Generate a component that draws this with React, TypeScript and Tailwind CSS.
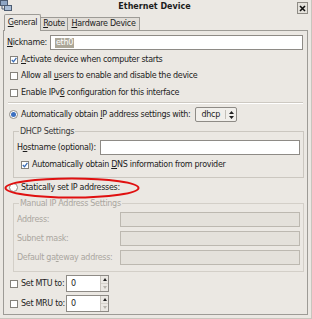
import React from 'react';

const Check: React.FC<{ checked?: boolean }> = ({ checked }) => (
  <span className="w-[8px] h-[8px] border border-[#85827c] bg-white flex items-center justify-center shrink-0">
    {checked && (
      <svg width="6" height="6" viewBox="0 0 6 6">
        <path d="M0.8 3 L2.5 4.8 L5.4 0.8" fill="none" stroke="#3a6cb4" strokeWidth="1.3" />
      </svg>
    )}
  </span>
);

const Radio: React.FC<{ checked?: boolean }> = ({ checked }) => (
  <span className="w-[9px] h-[9px] rounded-full border border-[#8e8b85] bg-white flex items-center justify-center shrink-0">
    {checked && <span className="w-[5px] h-[5px] rounded-full bg-[#3b6fc0]" />}
  </span>
);

const Spin: React.FC<{ value: string }> = ({ value }) => (
  <div className="w-[43px] h-[17px] flex border border-[#8e8b86] bg-white shrink-0">
    <span className="flex-1 pl-[4px] flex items-center">{value}</span>
    <span className="w-[8px] flex flex-col border-l border-[#c8c4bd] bg-[#ebe8e3]">
      <span className="flex-1 flex items-center justify-center">
        <svg width="4" height="3" viewBox="0 0 4 3"><path d="M0 3 L2 0 L4 3 Z" fill="#222" /></svg>
      </span>
      <span className="flex-1 flex items-center justify-center border-t border-[#d6d2cb]">
        <svg width="4" height="3" viewBox="0 0 4 3"><path d="M0 0 L2 3 L4 0 Z" fill="#b7b3ac" /></svg>
      </span>
    </span>
  </div>
);

const App: React.FC = () => {
  return (
    <div className="w-[312px] h-[319px] bg-[#ebe8e3] font-['DejaVu_Sans',sans-serif] text-[8px] leading-[10px] tracking-[-0.3px] whitespace-nowrap text-[#1c1c1c] flex flex-col border-r border-b border-[#c9c5be] overflow-hidden">
      {/* title bar */}
      <div className="h-[14px] grid grid-cols-[12px_1fr_14px] shrink-0">
        <svg width="12" height="12" viewBox="0 0 12 12">
          <rect x="0.5" y="0.5" width="7" height="5" fill="#8fa6c4" stroke="#4d5c72" />
          <rect x="4.5" y="5.5" width="7" height="5" fill="#a9bdd6" stroke="#4d5c72" />
          <path d="M2 6 V9 H4" fill="none" stroke="#4d5c72" />
        </svg>
        <div className="text-center font-bold tracking-normal pt-[2px]">Ethernet Device</div>
        <div className="w-[11px] h-[12px] mt-[2px] border border-[#8e8b85] bg-[#e4e1db] flex items-center justify-center">
          <svg width="7" height="7" viewBox="0 0 7 7">
            <path d="M1 1 L6 6 M6 1 L1 6" stroke="#111" strokeWidth="1.6" />
          </svg>
        </div>
      </div>

      {/* tabs */}
      <div className="h-[16px] flex items-end pl-[4px] shrink-0 relative z-10">
        <div className="w-[37px] h-[17px] mb-[-1px] border-t border-l border-r border-[#9d9b96] rounded-t-[2px] bg-[#ebe8e3] flex items-center justify-center">
          <span><u>G</u>eneral</span>
        </div>
        <div className="w-[27px] h-[13px] border-t border-r border-[#9d9b96] bg-[#e2ded8] flex items-center justify-center">
          <span><u>R</u>oute</span>
        </div>
        <div className="w-[72px] h-[13px] border-t border-r border-[#9d9b96] bg-[#e2ded8] flex items-center justify-center">
          <span><u>H</u>ardware Device</span>
        </div>
      </div>

      {/* panel */}
      <div className="ml-[3px] w-[305px] h-[285px] border border-[#9d9b96] pl-[3px] pr-[3px] flex flex-col shrink-0">
        <div className="mt-[4px] h-[15px] flex items-center">
          <span className="w-[43px]"><u>N</u>ickname:</span>
          <div className="w-[253px] h-[15px] border border-[#8e8b86] bg-white flex items-center pl-[4px]">
            <span className="bg-[#aca798] text-white px-[1px]">eth0</span>
          </div>
        </div>

        <div className="mt-[2px] h-[16px] flex items-center gap-[3px] pl-[3px]">
          <Check checked />
          <span><u>A</u>ctivate device when computer starts</span>
        </div>
        <div className="h-[16px] flex items-center gap-[3px] pl-[3px]">
          <Check />
          <span>Allow all <u>u</u>sers to enable and disable the device</span>
        </div>
        <div className="mt-[1px] h-[16px] flex items-center gap-[3px] pl-[3px]">
          <Check />
          <span>Enable IPv<u>6</u> configuration for this interface</span>
        </div>
        <div className="mt-[1px] ml-[1px] mr-[1px] h-[2px] border-t border-[#cdc9c2] border-b border-b-white" />

        <div className="mt-[3px] h-[15px] flex items-center pl-[2px]">
          <Radio checked />
          <span className="ml-[3px]">Automatically obtain <u>I</u>P address settings with:</span>
          <div className="ml-[4px] w-[42px] h-[15px] border border-[#8e8b86] rounded-[2px] bg-[#f1efeb] flex items-center">
            <span className="pl-[6px] w-[29px]">dhcp</span>
            <span className="h-[9px] border-l border-[#c3bfb8]" />
            <svg width="5" height="8" viewBox="0 0 5 8" className="ml-[3px]">
              <path d="M0 3 L2.5 0 L5 3 Z M0 5 L2.5 8 L5 5 Z" fill="#222" />
            </svg>
          </div>
        </div>

        <fieldset className="mt-[4px] ml-[6px] mr-[1px] border border-[#cbc7c0] pl-[3px] pr-[3px] pt-[3px] pb-[5px]">
          <legend className="px-[1px] ml-[2px] leading-[11px] text-[#3a3a3a]">DHCP Settings</legend>
          <div className="h-[15px] flex items-center">
            <span className="w-[83px]">H<u>o</u>stname (optional):</span>
            <div className="w-[200px] h-[15px] border border-[#8e8b86] bg-white" />
          </div>
          <div className="mt-[2px] h-[15px] flex items-center gap-[3px] pl-[4px]">
            <Check checked />
            <span>Automatically obtain <u>D</u>NS information from provider</span>
          </div>
        </fieldset>

        <div className="mt-[2px] h-[15px] flex items-center pl-[2px] relative">
          <Radio />
          <span className="ml-[3px]">Statically set IP addresses:</span>
          <svg className="absolute left-[-3px] top-[-3px]" width="136" height="22" viewBox="0 0 136 22">
            <ellipse cx="68" cy="11" rx="66.5" ry="9.6" fill="none" stroke="#e01010" strokeWidth="2" />
          </svg>
        </div>

        <fieldset className="mt-[3px] ml-[6px] mr-[1px] border border-[#d3cfc8] pl-[3px] pr-[3px] pt-[3px] pb-[6px] text-[#aaa69f]">
          <legend className="px-[1px] ml-[2px] leading-[11px]">Manual IP Address Settings</legend>
          <div className="h-[15px] flex items-center">
            <span className="w-[103px]">Address:</span>
            <div className="w-[180px] h-[15px] border border-[#bcb8b0] bg-[#e4e1db]" />
          </div>
          <div className="mt-[4px] h-[15px] flex items-center">
            <span className="w-[103px]">Subnet mask:</span>
            <div className="w-[180px] h-[15px] border border-[#bcb8b0] bg-[#e4e1db]" />
          </div>
          <div className="mt-[4px] h-[15px] flex items-center">
            <span className="w-[103px]">Default ga<u>t</u>eway address:</span>
            <div className="w-[180px] h-[15px] border border-[#bcb8b0] bg-[#e4e1db]" />
          </div>
        </fieldset>

        <div className="mt-[3px] h-[17px] flex items-center pl-[3px]">
          <Check />
          <span className="ml-[3px] w-[45px]">Set MTU to:</span>
          <Spin value="0" />
        </div>
        <div className="mt-[3px] h-[17px] flex items-center pl-[3px]">
          <Check />
          <span className="ml-[3px] w-[45px]">Set MRU to:</span>
          <Spin value="0" />
        </div>
      </div>
    </div>
  );
};

export default App;
